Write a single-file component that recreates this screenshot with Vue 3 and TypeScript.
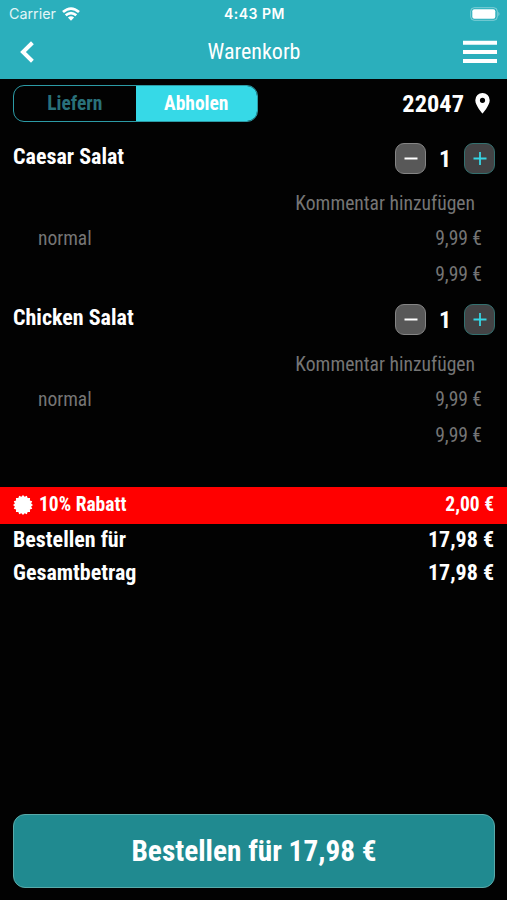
<script setup lang="ts">
import { ref } from 'vue'

interface CartItem {
  name: string
  quantity: number
  variant: string
  price: string
}

const mode = ref<'deliver' | 'pickup'>('pickup')
const items = ref<CartItem[]>([
  { name: 'Caesar Salat', quantity: 1, variant: 'normal', price: '9,99 €' },
  { name: 'Chicken Salat', quantity: 1, variant: 'normal', price: '9,99 €' },
])

const sealPoints = Array.from({ length: 32 }, (_, i) => {
  const radius = i % 2 === 0 ? 10 : 8.3
  const angle = (i * Math.PI) / 16
  return `${(10 + radius * Math.sin(angle)).toFixed(2)},${(10 - radius * Math.cos(angle)).toFixed(2)}`
}).join(' ')
</script>

<template>
  <main class="screen">
    <header class="header">
      <div class="status">
        <div class="carrier">
          <span>Carrier</span>
          <svg class="wifi" width="18" height="14" viewBox="0 0 18 14" fill="none" stroke="#fff" stroke-width="2.7">
            <path d="M1 5.1Q9-2 17 5.1M3.7 8.3Q9 3.8 14.3 8.3" />
            <path d="M9 13.8 5.9 10.6Q9 8.1 12.1 10.6Z" fill="#fff" stroke="none" />
          </svg>
        </div>
        <span class="clock">4:43 PM</span>
        <svg class="battery" width="30" height="14" viewBox="0 0 30 14">
          <rect x="0.7" y="0.7" width="26.6" height="12.6" rx="3.6" fill="none" stroke="#fff" stroke-opacity=".4" stroke-width="1" />
          <rect x="2.3" y="2.3" width="23" height="9.4" rx="2" fill="#fff" />
          <path d="M28.4 4.8Q30.6 7 28.4 9.2Z" fill="#fff" fill-opacity=".4" />
        </svg>
      </div>
      <nav class="nav">
        <button class="plain" aria-label="Zurück">
          <svg width="15" height="22" viewBox="0 0 15 22" fill="none" stroke="#fff" stroke-width="4"><path d="M12.4 1.8 3 11l9.4 9.2" /></svg>
        </button>
        <h1 class="title">Warenkorb</h1>
        <button class="plain" aria-label="Menü">
          <svg width="34" height="24" viewBox="0 0 34 24" fill="#fff"><path d="M0 0.7h34v4H0zM0 10h34v4H0zM0 19h34v4H0z" /></svg>
        </button>
      </nav>
    </header>

    <section class="options">
      <div class="toggle">
        <button :class="['choice', { active: mode === 'deliver' }]" @click="mode = 'deliver'">Liefern</button>
        <button :class="['choice', { active: mode === 'pickup' }]" @click="mode = 'pickup'">Abholen</button>
      </div>
      <div class="location">
        <span>22047</span>
        <svg width="15" height="21" viewBox="0 0 15 21"><path fill="#fff" fill-rule="evenodd" d="M7.5 0A7.2 7.2 0 0 0 .3 7.2C.3 12.6 7.5 20.6 7.5 20.6S14.7 12.6 14.7 7.2A7.2 7.2 0 0 0 7.5 0Zm0 4.7a2.6 2.6 0 1 1 0 5.2 2.6 2.6 0 0 1 0-5.2Z" /></svg>
      </div>
    </section>

    <article v-for="item in items" :key="item.name" class="item">
      <div class="item-head">
        <h2 class="name">{{ item.name }}</h2>
        <div class="stepper">
          <button class="step" aria-label="Weniger" @click="item.quantity = Math.max(1, item.quantity - 1)">
            <svg width="14" height="14" viewBox="0 0 14 14" stroke="#fff" stroke-width="2"><path d="M0.5 6.5h13" /></svg>
          </button>
          <span class="quantity">{{ item.quantity }}</span>
          <button class="step plus" aria-label="Mehr" @click="item.quantity++">
            <svg width="14" height="14" viewBox="0 0 14 14" stroke="#36d5e4" stroke-width="1.8"><path d="M0.5 6.5h13M7 0v13" /></svg>
          </button>
        </div>
      </div>
      <div class="comment">Kommentar hinzufügen</div>
      <div class="line"><span>{{ item.variant }}</span><span>{{ item.price }}</span></div>
      <div class="line sum"><span>{{ item.price }}</span></div>
    </article>

    <section class="totals">
      <div class="discount">
        <svg width="20" height="20" viewBox="0 0 20 20"><polygon :points="sealPoints" fill="#fff" /></svg>
        <span class="discount-name">10% Rabatt</span>
        <span>2,00 €</span>
      </div>
      <div class="total"><span>Bestellen für</span><span>17,98 €</span></div>
      <div class="total"><span>Gesamtbetrag</span><span>17,98 €</span></div>
    </section>

    <footer class="footer">
      <button class="order">Bestellen für 17,98 €</button>
    </footer>
  </main>
</template>

<style>
body {
  margin: 0;
  background: #000;
}
</style>

<style scoped>
.screen {
  display: flex;
  flex-direction: column;
  box-sizing: border-box;
  height: 900px;
  background: #020202;
  color: #fff;
  font-family: "Roboto Condensed", Roboto, sans-serif;
  font-stretch: 75%;
}
button {
  padding: 0;
  border: 0;
  background: none;
  color: inherit;
  font: inherit;
}
svg {
  display: block;
  flex: none;
}
h1, h2 {
  margin: 0;
}
.header {
  box-sizing: border-box;
  height: 79px;
  background: #2bafbc;
}
.status {
  display: grid;
  grid-template-columns: 1fr auto 1fr;
  align-items: center;
  height: 27px;
  padding: 0 7px 0 9px;
  font-family: Inter, sans-serif;
  font-stretch: normal;
  font-size: 14px;
}
.carrier {
  display: flex;
  align-items: center;
  gap: 6px;
  color: #e2f5f7;
  font-size: 14.3px;
}
.clock {
  font-weight: 600;
  letter-spacing: 0.5px;
}
.battery {
  justify-self: end;
}
.nav {
  display: flex;
  align-items: center;
  justify-content: space-between;
  height: 50px;
  padding: 0 10px 0 20px;
}
.title {
  padding: 0 0 2px 10px;
  font-size: 22px;
  font-weight: 400;
}
.options {
  display: flex;
  align-items: center;
  justify-content: space-between;
  height: 37px;
  padding: 6px 17px 0 13px;
}
.toggle {
  display: grid;
  grid-template-columns: 1fr 1fr;
  box-sizing: border-box;
  width: 245px;
  height: 37px;
  overflow: hidden;
  border: 1px solid #2c9ba6;
  border-radius: 11px;
}
.choice {
  color: #29717a;
  font-size: 19.5px;
  font-weight: 700;
}
.choice.active {
  background: #36d9e7;
  color: #fff;
}
.location {
  display: flex;
  align-items: center;
  gap: 11px;
  font-size: 24.4px;
  font-weight: 700;
}
.location svg {
  margin-bottom: 1px;
}
.item {
  height: 161px;
}
.options + .item {
  margin-top: 19px;
}
.item-head {
  display: flex;
  justify-content: space-between;
  height: 45px;
  padding: 0 12px 0 13px;
}
.name {
  font-size: 22px;
  font-weight: 700;
  line-height: 31px;
}
.stepper {
  display: flex;
  align-items: center;
  height: 31px;
  padding-top: 2px;
}
.step {
  display: grid;
  place-items: center;
  box-sizing: border-box;
  width: 31px;
  height: 31px;
  border: 1px solid #858585;
  border-radius: 9px;
  background: #585858;
}
.step.plus {
  border-color: #34706f;
  background: #434345;
}
.quantity {
  width: 38px;
  text-align: center;
  font-size: 24px;
  font-weight: 700;
}
.comment {
  padding-right: 32px;
  color: #757575;
  font-size: 19.6px;
  line-height: 35px;
  text-align: right;
}
.line {
  display: flex;
  justify-content: space-between;
  padding: 0 25px 0 38px;
  color: #757575;
  font-size: 19.5px;
  line-height: 35.5px;
}
.sum {
  justify-content: flex-end;
}
.totals {
  margin-top: 24px;
}
.discount {
  display: flex;
  box-sizing: border-box;
  align-items: center;
  height: 37px;
  padding: 0 13px 2px;
  background: #f00;
  font-size: 19.5px;
  font-weight: 700;
}
.discount-name {
  flex: 1;
  margin-left: 6px;
}
.total {
  display: flex;
  justify-content: space-between;
  padding: 0 13px;
  font-size: 22px;
  font-weight: 700;
  line-height: 33px;
}
.discount + .total {
  margin-top: -1px;
}
.footer {
  display: flex;
  margin-top: auto;
  padding: 0 12px 12px 13px;
}
.order {
  box-sizing: border-box;
  flex: 1;
  height: 74px;
  border: 1px solid #59aaa9;
  border-radius: 12px;
  background: #208a90;
  font-size: 29.3px;
  font-weight: 700;
}
</style>
